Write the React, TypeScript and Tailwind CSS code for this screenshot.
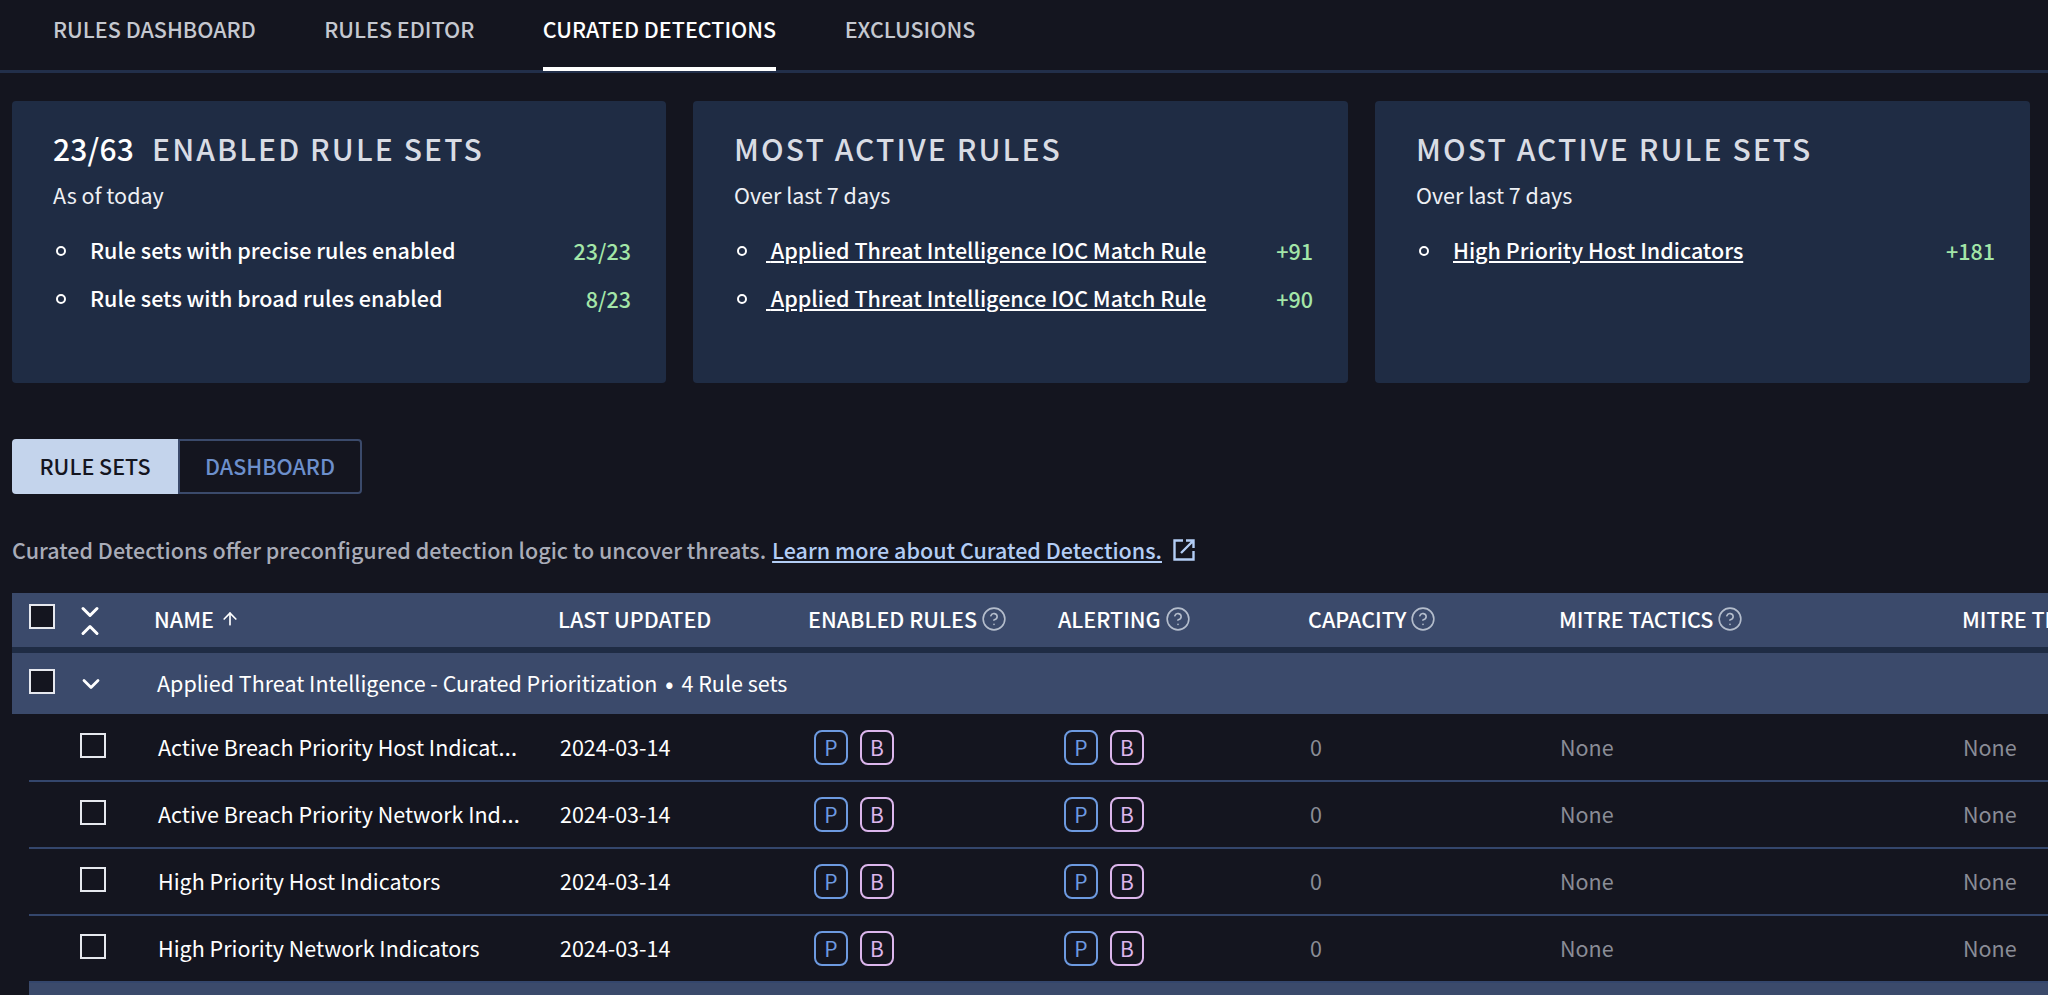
import { ArrowUp, ChevronDown, ChevronUp, CircleHelp } from "lucide-react";

const tabs = [
  { label: "RULES DASHBOARD", active: false },
  { label: "RULES EDITOR", active: false },
  { label: "CURATED DETECTIONS", active: true },
  { label: "EXCLUSIONS", active: false },
];

// names the table cuts off carry the ellipsis by hand, the CJK font centres its own
const ruleSets = [
  { name: "Active Breach Priority Host Indicat", cut: true },
  { name: "Active Breach Priority Network Ind", cut: true },
  { name: "High Priority Host Indicators", cut: false },
  { name: "High Priority Network Indicators", cut: false },
];

const Checkbox = () => <div className="h-[25px] w-[26px] border-2 border-[#e6e8ee] bg-[#14151f]" />;

const Help = () => <CircleHelp size={26} strokeWidth={1.5} className="ml-1 text-[#b4bdcc]" />;

const Bullet = () => <span className="ml-[3px] h-[10px] w-[10px] shrink-0 rounded-full border-2 border-white" />;

const Badge = ({ letter, tone }: { letter: string; tone: "p" | "b" }) => (
  <span
    className={
      tone === "p"
        ? "flex h-[35px] w-[34px] items-center justify-center rounded-lg border-[2.5px] border-[#6d9ae0] text-[21px] text-[#6d9ae0]"
        : "flex h-[35px] w-[34px] items-center justify-center rounded-lg border-[2.5px] border-[#dcb6ec] text-[21px] text-[#dcb6ec]"
    }
  >
    {letter}
  </span>
);

const Badges = () => (
  <div className="flex gap-3 pl-1">
    <Badge letter="P" tone="p" />
    <Badge letter="B" tone="b" />
  </div>
);

const StatRow = ({ label, value, link, pad }: { label: string; value: string; link?: boolean; pad?: boolean }) => (
  <li className="flex h-12 items-center">
    <Bullet />
    <span className={pad ? "ml-[19px] -mt-0.5" : "ml-[24px] -mt-0.5"}>
      {link ? (
        <a className="text-[21.5px] font-medium text-white underline underline-offset-2">
          {pad ? "\u00a0" : ""}
          {label}
        </a>
      ) : (
        <span className="text-[21.5px] font-medium text-white">{label}</span>
      )}
    </span>
    <span className="ml-auto text-[21.5px] font-medium text-[#a3e6a8]">{value}</span>
  </li>
);

const Card = ({ children, sub }: { children: React.ReactNode; sub: string }) => (
  <div className="h-[282px] rounded bg-[#1f2c44] pl-[41px] pr-[35px] pt-[26px]">
    <h2 className="h-[42px] text-[30px] leading-[42px] font-medium tracking-[2.1px] text-[#d9dce4]">{children}</h2>
    <p className="mt-[11px] text-[21.5px] leading-[30px] text-[#eef0f4]">{sub}</p>
  </div>
);

export default function App() {
  return (
    <div className="h-[995px] w-full overflow-hidden bg-[#14151f] font-['Noto_Sans_CJK_KR','Noto_Sans',sans-serif] text-white">
      <nav className="flex h-[73px] gap-[68.5px] border-b-[3px] border-[#222f4a] pl-[53px]">
        {tabs.map((t) => (
          <a
            key={t.label}
            className={
              t.active
                ? "h-[71px] border-b-4 border-white pt-[12px] text-[21.5px] leading-[34px] font-medium text-white"
                : "h-[71px] pt-[12px] text-[21.5px] leading-[34px] font-medium text-[#c5c8d0]"
            }
          >
            {t.label}
          </a>
        ))}
      </nav>

      <div className="mt-[28px] grid grid-cols-[654px_655px_655px] gap-[27px] px-3">
        <div className="relative">
          <Card sub="As of today">
            <span className="tracking-[0.2px] text-white">23/63</span>
            <span className="ml-[18px]">ENABLED RULE SETS</span>
          </Card>
          <ul className="absolute inset-x-0 top-[126px] pl-[41px] pr-[35px]">
            <StatRow label="Rule sets with precise rules enabled" value="23/23" />
            <StatRow label="Rule sets with broad rules enabled" value="8/23" />
          </ul>
        </div>
        <div className="relative">
          <Card sub="Over last 7 days">MOST ACTIVE RULES</Card>
          <ul className="absolute inset-x-0 top-[126px] pl-[41px] pr-[35px]">
            <StatRow label="Applied Threat Intelligence IOC Match Rule" value="+91" link pad />
            <StatRow label="Applied Threat Intelligence IOC Match Rule" value="+90" link pad />
          </ul>
        </div>
        <div className="relative">
          <Card sub="Over last 7 days">MOST ACTIVE RULE SETS</Card>
          <ul className="absolute inset-x-0 top-[126px] pl-[41px] pr-[35px]">
            <StatRow label="High Priority Host Indicators" value="+181" link />
          </ul>
        </div>
      </div>

      <div className="ml-3 mt-[56px] flex h-[55px] w-[350px] text-[21.5px]">
        <div className="flex w-[166px] items-center justify-center rounded-l bg-[#c4d4ec] font-medium text-[#14151f]">RULE SETS</div>
        <div className="flex flex-1 items-center justify-center rounded-r border-2 border-[#3b4a6b] font-medium text-[#6c8fcc]">DASHBOARD</div>
      </div>

      <p className="ml-3 mt-[38px] flex h-[36px] items-center text-[21.5px] font-medium text-[#a9acb8]">
        Curated Detections offer preconfigured detection logic to uncover threats.
        <a className="ml-[6px] text-[#b3cdf5] underline underline-offset-2">Learn more about Curated Detections.</a>
        <svg width="22" height="22" viewBox="0 0 22 22" fill="none" stroke="currentColor" strokeWidth="2.4" className="ml-[11px] text-[#b3cdf5]">
          <path d="M10 1.5H1.5v19h19V12" />
          <path d="M8 14L20 2M13 1.5h7.5V9" />
        </svg>
      </p>

      <div className="ml-3 mt-[25px]">
        <div className="grid h-[54px] grid-cols-[142px_404px_250px_250px_250px_251px_403px_300px] items-center bg-[#3b4a6b] text-[21.5px] font-medium text-white">
          <div className="flex items-center gap-[21px] pl-[17px]">
            <div className="pb-2">
              <Checkbox />
            </div>
            <span className="mt-[2px] flex flex-col items-center">
              <ChevronDown size={28} strokeWidth={2.6} className="-mb-[10px]" />
              <ChevronUp size={28} strokeWidth={2.6} />
            </span>
          </div>
          <div className="-mt-0.5 flex items-center">
            NAME
            <ArrowUp size={20} strokeWidth={2} className="ml-1.5" />
          </div>
          <div className="-mt-0.5">LAST UPDATED</div>
          <div className="-mt-0.5 flex items-center">
            ENABLED RULES
            <Help />
          </div>
          <div className="-mt-0.5 flex items-center">
            ALERTING
            <Help />
          </div>
          <div className="-mt-0.5 flex items-center">
            CAPACITY
            <Help />
          </div>
          <div className="-mt-0.5 flex items-center">
            MITRE TACTICS
            <Help />
          </div>
          <div className="-mt-0.5 whitespace-nowrap">MITRE TECHNIQUES</div>
        </div>

        <div className="h-[6px] bg-[#1f2c44]" />

        <div className="flex h-[61px] items-center bg-[#3b4a6b] text-[21.5px]">
          <div className="flex w-[145px] items-center gap-[22px] pl-[17px]">
            <div className="pb-1">
              <Checkbox />
            </div>
            <ChevronDown size={28} strokeWidth={2.4} />
          </div>
          Applied Threat Intelligence - Curated Prioritization
          <span className="mx-[8px] font-bold">•</span>4 Rule sets
        </div>

        <div className="ml-[17px] pt-px">
          {ruleSets.map((row) => (
            <div key={row.name} className="grid h-[67px] grid-cols-[129px_402px_250px_250px_250px_250px_403px_300px] items-center border-b-2 border-[#34466c] text-[21.5px] last:h-[64px] last:border-b-0">
              <div className="pb-1 pl-[51px]">
                <Checkbox />
              </div>
              <div className="whitespace-nowrap">
                {row.name}
                {row.cut && <span className="font-['Noto_Sans',sans-serif] text-[24px] leading-none">…</span>}
              </div>
              <div>2024-03-14</div>
              <Badges />
              <Badges />
              <div className="text-[#8a8c96]">0</div>
              <div className="text-[#8a8c96]">None</div>
              <div className="text-[#8a8c96]">None</div>
            </div>
          ))}
          <div className="h-[20px] bg-[#3b4a6b]" />
        </div>
      </div>
    </div>
  );
}
